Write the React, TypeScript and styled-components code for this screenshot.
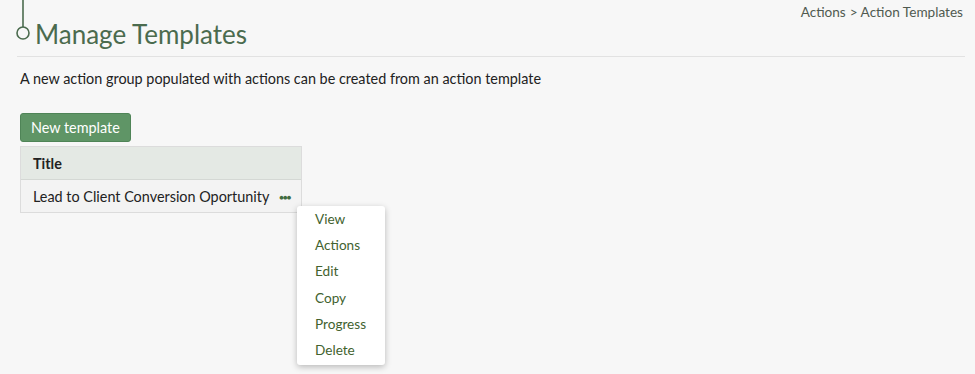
import React from "react";
import styled, { createGlobalStyle } from "styled-components";

const GlobalStyle = createGlobalStyle`
  body {
    margin: 0;
    background: #f7f7f7;
    font-family: "Lato", "Liberation Sans", sans-serif;
    color: #222;
  }
`;

const Page = styled.div`
  width: 975px;
  height: 374px;
  overflow: hidden;
  padding: 0 10px 0 20px;
  box-sizing: border-box;
`;

const Header = styled.div`
  display: flex;
  justify-content: space-between;
  align-items: flex-start;
  height: 56px;
  border-bottom: 1px solid #e2e2e2;
  margin-left: -3px;
  padding-left: 3px;
`;

const TitleWrap = styled.div`
  display: flex;
  align-items: flex-start;
  margin-left: -6px;
`;

const Marker = styled.svg`
  width: 16px;
  height: 42px;
  flex: none;
`;

const Title = styled.h1`
  margin: 18px 0 0 5px;
  font-size: 26px;
  font-weight: 400;
  color: #4b6b4e;
  line-height: 32px;
`;

const Breadcrumb = styled.div`
  margin: 4px 2px 0 0;
  font-size: 13.6px;
  color: #505a50;
  display: flex;
  gap: 4px;
`;

const Description = styled.p`
  margin: 13px 0 0;
  font-size: 14.4px;
  line-height: 18px;
`;

const Button = styled.button`
  margin-top: 25px;
  display: block;
  background: #5f9566;
  border: 1px solid #4f8457;
  color: #fff;
  border-radius: 3px;
  height: 29px;
  padding: 0 10px;
  font-family: inherit;
  font-size: 14.4px;
`;

const Table = styled.div`
  position: relative;
  margin-top: 4px;
  width: 280px;
  border: 1px solid #dcdcdc;
`;

const HeadRow = styled.div`
  height: 32px;
  background: #e4e9e4;
  border-bottom: 1px solid #d4d8d4;
  display: flex;
  align-items: center;
  padding-left: 12px;
  font-weight: 700;
  font-size: 14.4px;
`;

const Row = styled.div`
  height: 32px;
  background: #f3f3f3;
  display: flex;
  align-items: center;
  padding-left: 12px;
  font-size: 14.4px;
  white-space: nowrap;
`;

const Dots = styled.span`
  margin-left: 10px;
  color: #3f6b3f;
  font-weight: 700;
  letter-spacing: -0.8px;
  font-size: 7.5px;
  position: relative;
  top: 1px;
`;

const Menu = styled.ul`
  position: absolute;
  left: 276px;
  top: 59px;
  width: 88px;
  margin: 0;
  padding: 0 0 2px;
  list-style: none;
  background: #fff;
  border-radius: 3px;
  box-shadow: 0 2px 6px rgba(0, 0, 0, 0.25);
`;

const MenuItem = styled.li`
  padding: 0 0 0 18px;
  height: 26.2px;
  line-height: 26px;
  font-size: 13.6px;
  color: #42622f;
`;

const items = ["View", "Actions", "Edit", "Copy", "Progress", "Delete"];

export default function App() {
  return (
    <Page>
      <GlobalStyle />
      <Header>
        <TitleWrap>
          <Marker viewBox="0 0 16 42">
            <line x1="9" y1="0" x2="9" y2="27" stroke="#4b6b4e" strokeWidth="1.6" />
            <circle cx="9" cy="33" r="6" fill="none" stroke="#4b6b4e" strokeWidth="1.6" />
          </Marker>
          <Title>Manage Templates</Title>
        </TitleWrap>
        <Breadcrumb>
          <span>Actions</span>
          <span>&gt; Action Templates</span>
        </Breadcrumb>
      </Header>
      <Description>
        A new action group populated with actions can be created from an action template
      </Description>
      <Button>New template</Button>
      <Table>
        <HeadRow>Title</HeadRow>
        <Row>
          Lead to Client Conversion Oportunity
          <Dots>●●●</Dots>
        </Row>
        <Menu>
          {items.map((it) => (
            <MenuItem key={it}>{it}</MenuItem>
          ))}
        </Menu>
      </Table>
    </Page>
  );
}
